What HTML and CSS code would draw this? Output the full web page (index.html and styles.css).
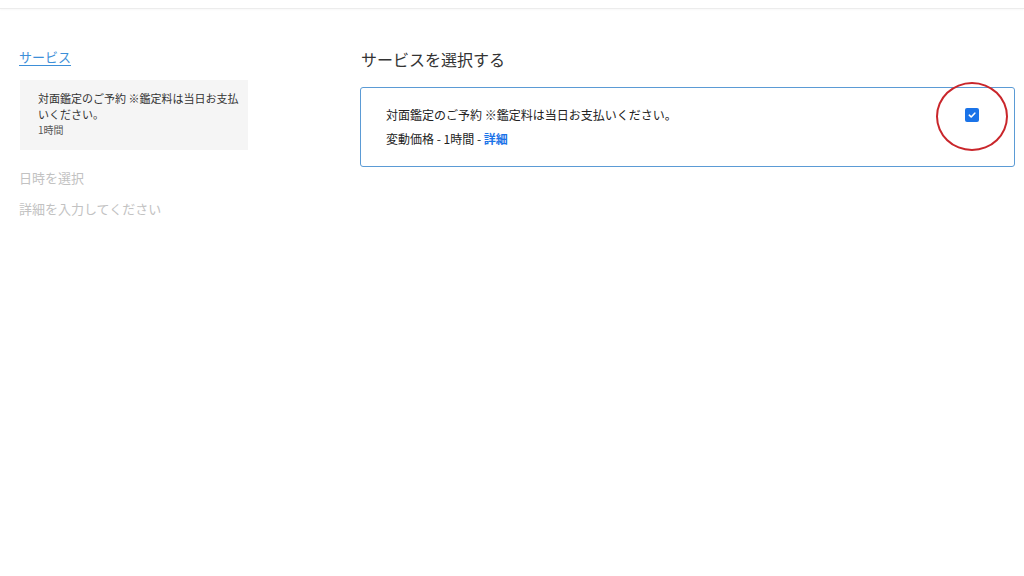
FILE: index.html
```html
<!DOCTYPE html>
<html lang="ja">
<head>
    <meta charset="utf-8">
    <title>サービスを選択する</title>
    <link rel="stylesheet" href="styles.css">
</head>
<body>
    <div class="top-bar"></div>

    <div class="page">
        <!-- steps -->
        <div class="sidebar">
            <a href="#" class="step-link">サービス</a>
            <div class="selected-box">
                <div class="selected-name">対面鑑定のご予約 ※鑑定料は当日お支払いください。</div>
                <div class="selected-time">1時間</div>
            </div>
            <div class="step-off">日時を選択</div>
            <div class="step-off">詳細を入力してください</div>
        </div>

        <!-- service list -->
        <div class="main">
            <h2 class="section-title">サービスを選択する</h2>
            <div class="service-card">
                <div class="service-info">
                    <div class="service-name">対面鑑定のご予約 ※鑑定料は当日お支払いください。</div>
                    <div class="service-meta">変動価格 - 1時間 - <a href="#" class="detail-link">詳細</a></div>
                </div>
                <div class="check-wrap">
                    <span class="checkbox">
                        <svg width="10" height="10" viewBox="0 0 10 10">
                            <path d="M2.3 5.2 L4.2 7 L7.8 3.2" fill="none" stroke="#fff" stroke-width="1.6" stroke-linecap="round" stroke-linejoin="round"/>
                        </svg>
                    </span>
                    <span class="mark-circle"></span>
                </div>
            </div>
        </div>
    </div>
</body>
</html>
```

FILE: styles.css
```css
body {
    margin: 0;
    background-color: #fff;
    font-family: "Noto Sans CJK JP", "Liberation Sans", sans-serif;
    color: #333;
}
.top-bar {
    height: 8px;
    border-bottom: 1px solid #ececec;
    box-shadow: 0 1px 2px rgba(0, 0, 0, 0.03);
}
.page {
    display: grid;
    grid-template-columns: 229px 1fr;
    gap: 112px;
    padding: 34px 9px 0 19px;
}
.step-link {
    display: inline-block;
    font-size: 13px;
    line-height: 20px;
    color: #3d8fd8;
    text-decoration: underline;
    text-underline-offset: 3px;
}
.selected-box {
    margin: 13px 0 0 1px;
    background-color: #f5f5f5;
    padding: 10px 4px 13px 18px;
    height: 47px;
}
.selected-name {
    font-size: 11px;
    line-height: 16px;
    color: #333;
}
.selected-time {
    font-size: 10px;
    line-height: 16px;
    color: #555;
}
.step-off {
    font-size: 13px;
    color: #c2c2c2;
    line-height: 20px;
}
.selected-box + .step-off {
    margin-top: 18px;
}
.step-off + .step-off {
    margin-top: 11px;
}
.main {
    min-width: 0;
}
.section-title {
    margin: 4px 0 0 1px;
    font-size: 16px;
    font-weight: normal;
    line-height: 24px;
    color: #333;
}
.service-card {
    margin-top: 16px;
    border: 1px solid #5b9bd5;
    border-radius: 3px;
    height: 78px;
    display: flex;
    justify-content: space-between;
    align-items: flex-start;
    padding: 0 35px 0 25px;
}
.service-info {
    padding-top: 18px;
}
.service-name {
    font-size: 12px;
    line-height: 18px;
    color: #222;
}
.service-meta {
    margin-top: 6px;
    font-size: 12px;
    line-height: 18px;
    color: #222;
}
.detail-link {
    color: #1a73e8;
    font-weight: bold;
    text-decoration: none;
}
.check-wrap {
    position: relative;
    margin-top: 20px;
}
.checkbox {
    display: flex;
    align-items: center;
    justify-content: center;
    width: 14px;
    height: 14px;
    border-radius: 2px;
    background-color: #1a73e8;
}
.mark-circle {
    position: absolute;
    left: -29px;
    top: -26px;
    width: 68px;
    height: 65px;
    border: 2px solid #c9262b;
    border-radius: 50%;
}
```
